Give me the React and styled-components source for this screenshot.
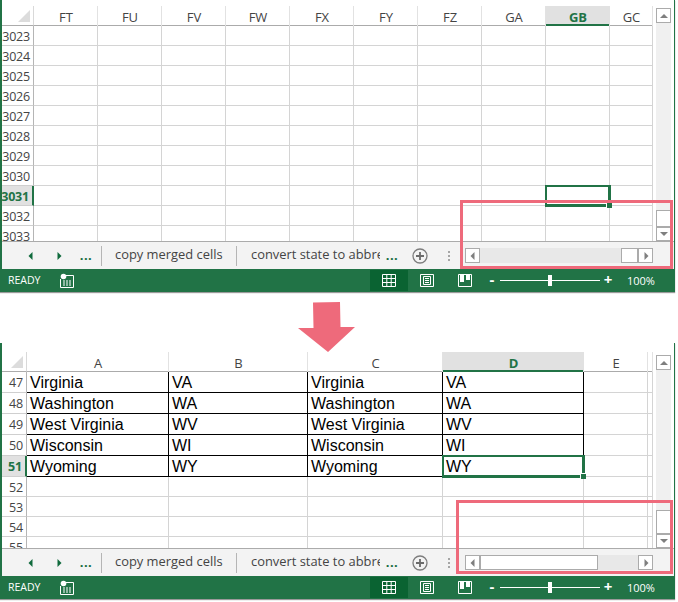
import React from 'react'
import styled, { createGlobalStyle } from 'styled-components'

const GlobalStyle = createGlobalStyle`
  html, body {
    margin: 0;
    padding: 0;
    background: #fff;
  }
`

const GREEN = '#217346'
const PINK = '#ee6a7b'
const UI_FONT = '"Open Sans", "Noto Sans", sans-serif'

const Page = styled.div`
  position: relative;
  width: 678px;
  height: 602px;
  overflow: hidden;
  background: #fff;
`
const Window = styled.section`
  position: absolute;
  left: 0;
  top: ${(p) => p.$top}px;
  width: 675px;
  height: ${(p) => p.$height}px;
  display: flex;
  flex-direction: column;
  box-sizing: border-box;
  padding-top: ${(p) => p.$pad}px;
  background: #fff;
  border-left: 2px solid ${GREEN};
  border-right: 1px solid ${GREEN};
  box-shadow: 0 1px 1px #9a9a9a;
`
const Body = styled.div`
  flex: 1;
  min-height: 0;
  display: flex;
`
const Sheet = styled.div`
  width: 651px;
  display: grid;
  grid-template-columns: ${(p) => p.$cols};
  grid-template-rows: ${(p) => p.$rows};
  overflow: hidden;
  font-family: ${UI_FONT};
`
const Corner = styled.div`
  position: relative;
  border-right: 1px solid #d9d9d9;
  border-bottom: 1px solid #ababab;
  &::after {
    content: '';
    position: absolute;
    right: 3px;
    bottom: 3px;
    width: 12px;
    height: 12px;
    background: #dcdcdc;
    clip-path: polygon(100% 0, 100% 100%, 0 100%);
  }
`
const ColHead = styled.div`
  display: flex;
  align-items: center;
  justify-content: center;
  font-size: 13px;
  padding: 2px 0 0 1px;
  color: ${(p) => (p.$active ? GREEN : '#444')};
  font-weight: ${(p) => (p.$active ? 700 : 400)};
  background: ${(p) => (p.$active ? '#e1e1e1' : '#fff')};
  border-right: 1px solid ${(p) => (p.$active ? '#e1e1e1' : '#e2e2e2')};
  box-shadow: inset 0 -${(p) => (p.$active ? 2 : 1)}px 0 ${(p) => (p.$active ? GREEN : '#ababab')};
`
const RowHead = styled.div`
  display: flex;
  align-items: center;
  justify-content: flex-end;
  padding: 1px 3px 0 0;
  font-size: 12.5px;
  letter-spacing: -0.2px;
  color: ${(p) => (p.$active ? GREEN : '#444')};
  font-weight: ${(p) => (p.$active ? 700 : 400)};
  background: ${(p) => (p.$active ? '#e1e1e1' : '#fff')};
  border-right: ${(p) => (p.$active ? `2px solid ${GREEN}` : '1px solid #b5b5b5')};
  border-bottom: 1px solid #cfcfcf;
`
const Cell = styled.div`
  position: relative;
  display: flex;
  align-items: center;
  padding: 2px 0 0 3px;
  font-family: 'Liberation Sans', Arial, sans-serif;
  font-size: 16px;
  color: #000;
  white-space: nowrap;
  overflow: ${(p) => (p.$selected ? 'visible' : 'hidden')};
  border-right: 1px solid ${(p) => (p.$table ? '#000' : '#d4d4d4')};
  border-bottom: 1px solid ${(p) => (p.$table ? '#000' : '#d4d4d4')};
  ${(p) =>
    p.$selected &&
    `
    z-index: 2;
    box-shadow: 0 0 0 1px ${GREEN}, inset 0 0 0 1px ${GREEN};
    border-color: ${GREEN};
    &::after {
      content: '';
      position: absolute;
      right: -3px;
      bottom: -3px;
      width: 5px;
      height: 5px;
      background: ${GREEN};
      border-left: 1px solid #fff;
      border-top: 1px solid #fff;
    }
  `}
`
const VScroll = styled.div`
  width: 15px;
  margin-left: 3px;
  display: flex;
  flex-direction: column;
  padding-top: ${(p) => p.$top}px;
  box-sizing: border-box;
`
const VTrack = styled.div`
  flex: 1;
  background: #f0f0f0;
  display: flex;
  flex-direction: column;
  justify-content: flex-end;
`
const ScrollBtn = styled.div`
  flex: none;
  width: ${(p) => p.$w}px;
  height: ${(p) => p.$h}px;
  box-sizing: border-box;
  display: flex;
  align-items: center;
  justify-content: center;
  background: #fff;
  border: 1px solid #ababab;
`
const VThumb = styled.div`
  height: ${(p) => p.$h}px;
  box-sizing: border-box;
  background: #fff;
  border: 1px solid #ababab;
`
const TabBar = styled.div`
  flex: none;
  height: 28px;
  display: flex;
  align-items: center;
  box-sizing: border-box;
  background: #f3f3f3;
  border-top: 1px solid #ababab;
  font-family: ${UI_FONT};
`
const NavSlot = styled.div`
  flex: none;
  width: ${(p) => p.$w}px;
  margin-left: ${(p) => p.$left || 0}px;
  display: flex;
  align-items: center;
  justify-content: center;
`
const Sep = styled.div`
  flex: none;
  width: 1px;
  height: 20px;
  background: #b5b5b5;
`
const Tab = styled.div`
  flex: none;
  width: ${(p) => p.$w}px;
  box-sizing: border-box;
  padding: 0 0 3px ${(p) => p.$pad}px;
  overflow: hidden;
  white-space: nowrap;
  font-size: 12.9px;
  color: #444;
`
const Dots = styled.div`
  font-size: 13px;
  font-weight: 700;
  line-height: 1;
  letter-spacing: 0.5px;
  color: #0f6a3c;
`
const HScroll = styled.div`
  flex: none;
  margin-left: 3px;
  width: 188px;
  height: 15px;
  display: flex;
  background: #e8e8e8;
`
const HThumb = styled.div`
  box-sizing: border-box;
  width: ${(p) => p.$w}px;
  margin-left: ${(p) => p.$offset}px;
  background: #fff;
  border: 1px solid #ababab;
`
const HTrack = styled.div`
  flex: 1;
  display: flex;
`
const StatusBar = styled.div`
  flex: none;
  height: 23px;
  display: flex;
  align-items: center;
  background: ${GREEN};
  color: #fff;
  font-family: ${UI_FONT};
  font-size: 10.5px;
`
const Ready = styled.span`
  width: 58px;
  padding: 0 0 1px 6px;
  box-sizing: border-box;
`
const Grow = styled.div`
  flex: 1;
`
const ViewBtn = styled.div`
  flex: none;
  width: 38px;
  height: 21px;
  display: flex;
  align-items: center;
  justify-content: center;
  background: ${(p) => (p.$active ? '#0a6332' : 'transparent')};
`
const ZoomMark = styled.span`
  width: 16px;
  text-align: center;
  font-size: 15px;
  font-weight: 700;
  line-height: 1;
  transform: translateY(-1px);
`
const Slider = styled.div`
  position: relative;
  width: 100px;
  height: 1px;
  background: #fff;
  &::after {
    content: '';
    position: absolute;
    left: 48px;
    top: -5px;
    width: 4px;
    height: 11px;
    background: #fff;
  }
`
const Percent = styled.span`
  width: 58px;
  box-sizing: border-box;
  padding-left: 11px;
  font-size: 11px;
`
const Callout = styled.div`
  position: absolute;
  left: ${(p) => p.$x}px;
  top: ${(p) => p.$y}px;
  width: ${(p) => p.$w}px;
  height: ${(p) => p.$h}px;
  box-sizing: border-box;
  border: 3px solid ${PINK};
  z-index: 5;
`
const BigArrow = styled.svg`
  position: absolute;
  left: 296px;
  top: 300px;
  z-index: 6;
`

const Tri = ({ dir, color = '#7f7f7f', size = 8 }) => {
  const points = {
    up: '0,6 4,2 8,6',
    down: '0,2 8,2 4,6',
    left: '5.5,0 5.5,8 1.5,4',
    right: '2.5,0 2.5,8 6.5,4',
  }[dir]
  return (
    <svg width={size} height={size} viewBox="0 0 8 8">
      <polygon points={points} fill={color} />
    </svg>
  )
}

const PlusCircle = () => (
  <svg width="16" height="16" viewBox="0 0 16 16">
    <circle cx="8" cy="8" r="7" fill="none" stroke="#7d7d7d" strokeWidth="1.3" />
    <path d="M8 4v8M4 8h8" stroke="#6b6b6b" strokeWidth="1.8" />
  </svg>
)

const VDots = () => (
  <svg width="4" height="12" viewBox="0 0 4 12">
    <rect x="1" y="1" width="2" height="2" fill="#a6a6a6" />
    <rect x="1" y="5" width="2" height="2" fill="#a6a6a6" />
    <rect x="1" y="9" width="2" height="2" fill="#a6a6a6" />
  </svg>
)

const MacroIcon = () => (
  <svg width="14" height="15" viewBox="0 0 14 15">
    <circle cx="3.5" cy="3.5" r="2.8" fill="#fff" />
    <path d="M6 2.5h7.5v12H.5V6" fill="none" stroke="#fff" />
    <path d="M3 8h8M3 10h8M3 12h8" stroke="#fff" strokeDasharray="2 1" />
  </svg>
)

const NormalIcon = () => (
  <svg width="14" height="13" viewBox="0 0 14 13">
    <path d="M.5.5h13v12H.5zM.5 4.5h13M.5 8.5h13M4.8.5v12M9.2.5v12" fill="none" stroke="#fff" />
  </svg>
)

const LayoutIcon = () => (
  <svg width="14" height="13" viewBox="0 0 14 13">
    <path d="M.5.5h13v12H.5z" fill="none" stroke="#fff" />
    <path d="M3.5 2.5h7v8h-7zM5 4.5h4M5 6.5h4M5 8.5h4" fill="none" stroke="#fff" />
  </svg>
)

const BreakIcon = () => (
  <svg width="14" height="13" viewBox="0 0 14 13">
    <path d="M.5.5h13v12H.5z" fill="none" stroke="#fff" />
    <path d="M2 0h4v8H2zM8 0h4v6H8z" fill="#fff" />
  </svg>
)

const ArrowShape = () => (
  <BigArrow width="62" height="54" viewBox="0 0 62 54">
    <polygon points="17,2.5 44,2 44.5,27 59,27 32,52 2,28 17.5,28" fill={PINK} />
  </BigArrow>
)

const Bottom = ({ thumb, thumbOffset }) => (
  <>
    <TabBar>
      <NavSlot $w={42} $left={8}>
        <Tri dir="left" color="#0f6a3c" />
      </NavSlot>
      <NavSlot $w={14}>
        <Tri dir="right" color="#0f6a3c" />
      </NavSlot>
      <NavSlot $w={30} $left={5}>
        <Dots>...</Dots>
      </NavSlot>
      <Sep />
      <Tab $w={134} $pad={13}>copy merged cells</Tab>
      <Sep />
      <Tab $w={143} $pad={14}>convert state to abbreviation</Tab>
      <NavSlot $w={24}>
        <Dots>...</Dots>
      </NavSlot>
      <NavSlot $w={32}>
        <PlusCircle />
      </NavSlot>
      <NavSlot $w={26}>
        <VDots />
      </NavSlot>
      <HScroll>
        <ScrollBtn $w={15} $h={15}>
          <Tri dir="left" />
        </ScrollBtn>
        <HTrack>
          <HThumb $w={thumb} $offset={thumbOffset} />
        </HTrack>
        <ScrollBtn $w={15} $h={15}>
          <Tri dir="right" />
        </ScrollBtn>
      </HScroll>
    </TabBar>
    <StatusBar>
      <Ready>READY</Ready>
      <MacroIcon />
      <Grow />
      <ViewBtn $active>
        <NormalIcon />
      </ViewBtn>
      <ViewBtn>
        <LayoutIcon />
      </ViewBtn>
      <ViewBtn>
        <BreakIcon />
      </ViewBtn>
      <ZoomMark>-</ZoomMark>
      <Slider />
      <ZoomMark>+</ZoomMark>
      <Percent>100%</Percent>
    </StatusBar>
  </>
)

const Scrollbar = ({ top, thumb }) => (
  <VScroll $top={top}>
    <ScrollBtn $w={15} $h={15}>
      <Tri dir="up" />
    </ScrollBtn>
    <VTrack>
      <VThumb $h={thumb} />
    </VTrack>
    <ScrollBtn $w={15} $h={14}>
      <Tri dir="down" />
    </ScrollBtn>
  </VScroll>
)

const topCols = ['FT', 'FU', 'FV', 'FW', 'FX', 'FY', 'FZ', 'GA', 'GB', 'GC']
const topRows = [3023, 3024, 3025, 3026, 3027, 3028, 3029, 3030, 3031, 3032, 3033]

const TopSheet = () => (
  <Sheet $cols="32px repeat(9, 64px) 43px" $rows="20px repeat(11, 20px)">
    <Corner />
    {topCols.map((c) => (
      <ColHead key={c} $active={c === 'GB'}>
        {c}
      </ColHead>
    ))}
    {topRows.map((r) => (
      <React.Fragment key={r}>
        <RowHead $active={r === 3031}>{r}</RowHead>
        {topCols.map((c) => (
          <Cell key={c} $selected={r === 3031 && c === 'GB'} />
        ))}
      </React.Fragment>
    ))}
  </Sheet>
)

const states = [
  ['Virginia', 'VA'],
  ['Washington', 'WA'],
  ['West Virginia', 'WV'],
  ['Wisconsin', 'WI'],
  ['Wyoming', 'WY'],
]
const bottomCols = ['A', 'B', 'C', 'D', 'E', '']

const BottomSheet = () => (
  <Sheet
    $cols="25px 142px 139px 135px 141px 64px 5px"
    $rows="20px repeat(5, 21px) repeat(4, 20px)"
  >
    <Corner />
    {bottomCols.map((c) => (
      <ColHead key={c} $active={c === 'D'}>
        {c}
      </ColHead>
    ))}
    {states.map(([name, code], i) => (
      <React.Fragment key={name}>
        <RowHead $active={i === 4}>{47 + i}</RowHead>
        <Cell $table>{name}</Cell>
        <Cell $table>{code}</Cell>
        <Cell $table>{name}</Cell>
        <Cell $table={i !== 4} $selected={i === 4}>
          {code}
        </Cell>
        <Cell />
        <Cell />
      </React.Fragment>
    ))}
    {[52, 53, 54, 55].map((r) => (
      <React.Fragment key={r}>
        <RowHead>{r}</RowHead>
        {bottomCols.map((c) => (
          <Cell key={c} />
        ))}
      </React.Fragment>
    ))}
  </Sheet>
)

export default function App() {
  return (
    <Page>
      <GlobalStyle />
      <Window $top={0} $height={292} $pad={6}>
        <Body>
          <TopSheet />
          <Scrollbar top={2} thumb={17} />
        </Body>
        <Bottom thumb={17} thumbOffset={141} />
      </Window>
      <Window $top={343} $height={256} $pad={9}>
        <Body>
          <BottomSheet />
          <Scrollbar top={3} thumb={24} />
        </Body>
        <Bottom thumb={118} thumbOffset={0} />
      </Window>
      <ArrowShape />
      <Callout $x={460} $y={200} $w={213} $h={69} />
      <Callout $x={456} $y={500} $w={217} $h={74} />
    </Page>
  )
}
